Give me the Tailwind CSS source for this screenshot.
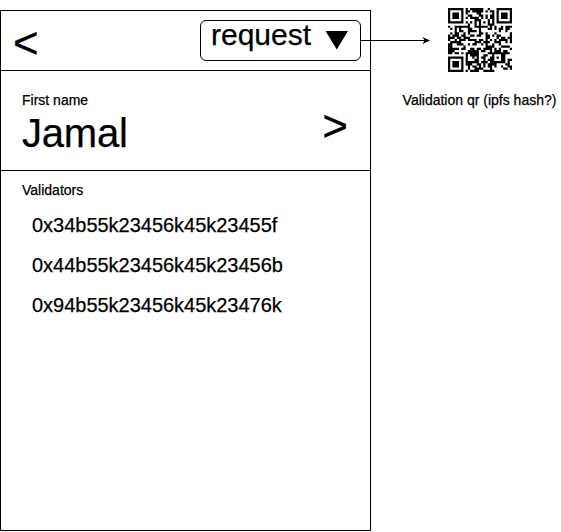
<!DOCTYPE html>
<html lang="en">
<head>
<meta charset="utf-8">
<title>Validators</title>
<script src="https://cdn.jsdelivr.net/npm/@tailwindcss/browser@4"></script>
</head>
<body class="overflow-hidden bg-white font-['Liberation_Sans',Arial,sans-serif] text-black [-webkit-text-stroke:0.25px_black]">
<div class="flex h-[532px] w-[561px] items-start">
  <main class="mt-[10px] flex h-[521px] w-[371px] shrink-0 flex-col border border-black">
    <header class="flex h-[60px] shrink-0 items-start justify-between border-b border-black pr-[9px] pl-[12px]">
      <button class="mt-[4px] text-[44px] leading-[56px]">&lt;</button>
      <div class="mt-[9px] flex h-[41px] w-[161px] justify-between rounded-[6px] border border-black pr-[12px] pl-[10px]">
        <span class="text-[30px] leading-[27px]">request</span>
        <svg class="mt-[10px] h-[19px] w-[23px]" viewBox="0 0 23 19"><path d="M0.5 0H23L11.75 18.5Z"/></svg>
      </div>
    </header>
    <section class="flex h-[100px] shrink-0 justify-between border-b border-black pr-[22px] pl-[21px]">
      <div class="pt-[21px]">
        <p class="text-[14px] leading-[16px]">First name</p>
        <h1 class="mt-[2px] text-[40px] leading-[46px] tracking-[-0.2px]">Jamal</h1>
      </div>
      <button class="mt-[27px] h-[56px] text-[44px] leading-[56px]">&gt;</button>
    </section>
    <section class="px-[21px] pt-[11px]">
      <h2 class="text-[14px] leading-[16px]">Validators</h2>
      <ul class="mt-[7px] pl-[10px] text-[20px] leading-[40px] tracking-[-0.02px]">
        <li>0x34b55k23456k45k23455f</li>
        <li>0x44b55k23456k45k23456b</li>
        <li>0x94b55k23456k45k23476k</li>
      </ul>
    </section>
  </main>
  <svg class="mt-[36px] -ml-[10px] h-[9px] w-[70px] shrink-0" viewBox="0 0 70 9"><path d="M0 4.5H64" stroke="#000"/><path d="M69 4.5L61.5 8L63.5 4.5L61.5 1Z"/></svg>
  <aside class="-ml-[29px] flex w-[155px] shrink-0 flex-col items-center pt-[8px]">
    <svg id="qr" class="h-[64px] w-[64px]" viewBox="0 0 29 29"><path/></svg>
    <p class="mt-[20px] text-[14px] leading-[16px] whitespace-nowrap">Validation qr (ipfs hash?)</p>
  </aside>
</div>
<script>
// Version 3 QR code (29 x 29 modules), error correction level M.
function qr(text, mask){
  const N=29, nd=44, ne=26, bits=[];
  const put=(v,n)=>{for(let i=n-1;i>=0;i--)bits.push(v>>i&1)};
  put(4,4);put(text.length,8);for(const c of text)put(c.charCodeAt(0),8);
  put(0,4);
  const d=[];for(let i=0;i<bits.length;i+=8)d.push(parseInt(bits.slice(i,i+8).join(''),2));
  for(let p=0xEC;d.length<nd;p^=0xEC^0x11)d.push(p);
  const mul=(x,y)=>{let z=0;for(let i=7;i>=0;i--){z=(z<<1)^((z>>>7)*0x11D);z^=((y>>>i)&1)*x}return z};
  const g=Array(ne).fill(0);g[ne-1]=1;let root=1;
  for(let i=0;i<ne;i++){for(let j=0;j<ne;j++){g[j]=mul(g[j],root);if(j+1<ne)g[j]^=g[j+1]}root=mul(root,2)}
  const r=Array(ne).fill(0);
  for(const b of d){const f=b^r.shift();r.push(0);g.forEach((c,i)=>r[i]^=mul(c,f))}
  const all=d.concat(r);
  const m=[...Array(N)].map(()=>Array(N).fill(0)),fn=[...Array(N)].map(()=>Array(N).fill(false));
  const set=(x,y,v)=>{m[y][x]=v?1:0;fn[y][x]=true};
  for(let i=0;i<N;i++){set(6,i,i%2==0);set(i,6,i%2==0)}
  for(const [cx,cy] of [[3,3],[N-4,3],[3,N-4]])for(let y=-4;y<=4;y++)for(let x=-4;x<=4;x++){
    const k=Math.max(Math.abs(x),Math.abs(y)),X=cx+x,Y=cy+y;if(X>=0&&X<N&&Y>=0&&Y<N)set(X,Y,k!=2&&k!=4)}
  for(let y=-2;y<=2;y++)for(let x=-2;x<=2;x++)set(22+x,22+y,Math.max(Math.abs(x),Math.abs(y))!=1);
  let rem=mask;for(let i=0;i<10;i++)rem=(rem<<1)^((rem>>>9)*0x537);
  const fb=(mask<<10|rem)^0x5412,B=i=>fb>>i&1;
  for(let i=0;i<=5;i++)set(8,i,B(i));set(8,7,B(6));set(8,8,B(7));set(7,8,B(8));
  for(let i=9;i<15;i++)set(14-i,8,B(i));
  for(let i=0;i<8;i++)set(N-1-i,8,B(i));for(let i=8;i<15;i++)set(8,N-15+i,B(i));set(8,N-8,1);
  const M=(x,y)=>(x*y%2+x*y%3)%2;
  let i=0;for(let right=N-1;right>=1;right-=2){if(right==6)right=5;for(let v=0;v<N;v++)for(let j=0;j<2;j++){
    const x=right-j,up=((right+1)&2)==0,y=up?N-1-v:v;if(!fn[y][x]){const b=i<560?all[i>>3]>>(7-(i&7))&1:0;i++;m[y][x]=b^(M(x,y)==0?1:0)}}}
  let p='';m.forEach((row,y)=>{for(let x=0;x<N;x++)if(row[x]){let w=1;while(row[x+w])w++;p+=`M${x} ${y}h${w}v1h-${w}z`;x+=w}});return p;
}
document.querySelector('#qr path').setAttribute('d',qr('http://en.m.wikipedia.org',6));
</script>
</body>
</html>
